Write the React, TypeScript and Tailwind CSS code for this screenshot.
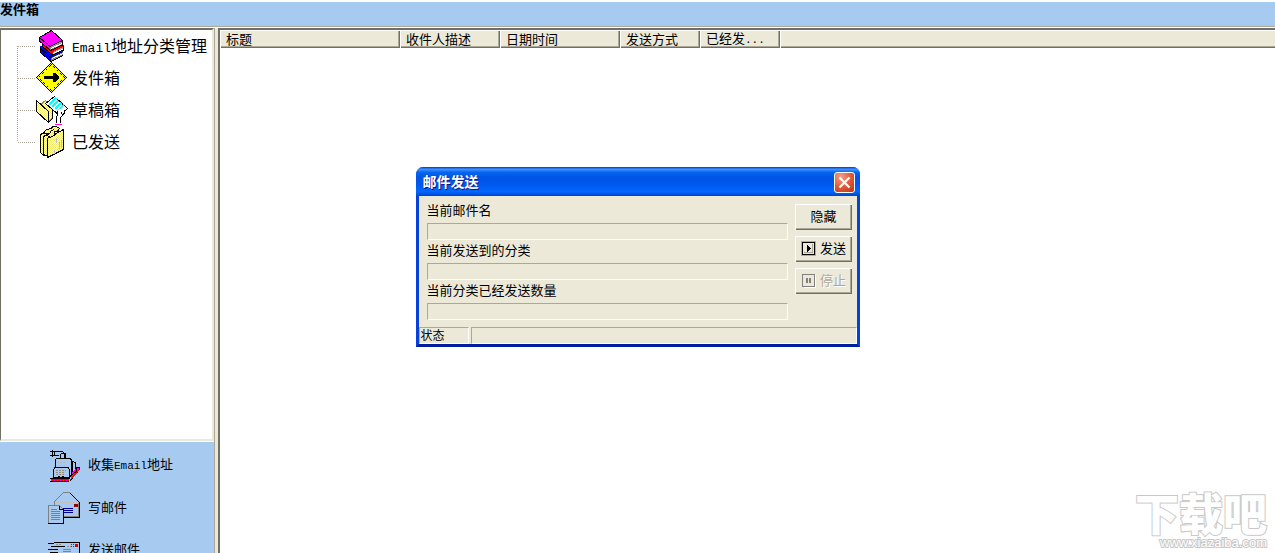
import React from 'react';

const BooksIcon = () => (
  <svg width="32" height="32" viewBox="0 0 32 32" shapeRendering="crispEdges" fill="none">
    {/* Blue book */}
    <path d="M5 17L15 26L27 20V26L15 32L5 23Z" fill="#808080" />
    <path d="M16 28.5L27 23.5" stroke="#fff" />
    <path d="M4.5 16.5L7 15L15.5 25L27 20V22L15 28V31.5L4.5 22.5Z" fill="#0000ff" />
    <path d="M4.5 16.5V22.5L15 31.5L27 25.5M5 19L15 27.5" stroke="#000" />
    {/* Red book */}
    <path d="M7 14L16 21L28 16V20L17 25L7 17Z" fill="#a0a0a0" />
    <path d="M17 23.5L27 19" stroke="#fff" />
    <path d="M6.5 12.5L16 20L28 14.5V16.5L16.5 22V24.5L6.5 16.5Z" fill="#ff0000" />
    <path d="M6.5 13V16.5L16.5 25L27.5 20V15.5" stroke="#000" />
    {/* Magenta book */}
    <path d="M14 16.5L26.5 10.5V15L14.5 20.5Z" fill="#909090" />
    <path d="M15 18.5L26 13.5" stroke="#fff" />
    <path d="M3.5 7.5L14 16.5V20L3.5 11Z" fill="#ff00ff" />
    <path d="M3.5 7.5V11L14.5 20.5L26.5 15V10.5" stroke="#000" />
    <path d="M15.5 .5L26.5 10.5L14 16.5L3.5 7.5Z" fill="#ff00ff" stroke="#000" />
  </svg>
);

const SignIcon = () => (
  <svg width="32" height="32" viewBox="0 0 32 32" shapeRendering="crispEdges">
    <path d="M15.5 .5L30.5 15.5L15.5 30.5L.5 15.5Z" fill="#ffff00" stroke="#000" />
    <path d="M15.5 2.5L28.5 15.5L15.5 28.5L2.5 15.5Z" fill="none" stroke="#000" strokeDasharray="1 1" />
    <path d="M8 14H17V11H19L23 15V16L19 20H17V17H8Z" fill="#000" />
  </svg>
);

const DraftIcon = () => (
  <svg width="32" height="32" viewBox="0 0 32 32" shapeRendering="crispEdges">
    <defs>
      <pattern id="manila" width="2" height="2" patternUnits="userSpaceOnUse">
        <rect width="2" height="2" fill="#fff" />
        <rect width="1" height="1" fill="#f5ea70" />
        <rect x="1" y="1" width="1" height="1" fill="#f5ea70" />
      </pattern>
    </defs>
    <path d="M.5 6.5L4.5 10.5L9.5 6.5L16.5 13.5V23.5L12.5 27.5L.5 17.5Z" fill="url(#manila)" stroke="#8a8a60" />
    <path d="M.5 6.5L12.5 17.5V28.5L.5 17.5Z" fill="url(#manila)" stroke="#000" />
    <path d="M12.5 28.5L16.5 24.5V15.5" fill="none" stroke="#000" />
    <path d="M18.5 2.5L31.5 14.5L23.5 21.5L9.5 9.5Z" fill="#fff" stroke="#000" />
    <path d="M13 11L20 4M16 13L22 7M19 15L25 9M21 17L28 11" stroke="#00ffff" strokeWidth="1.5" />
    <path d="M20.5 29V23.5L21.5 20V16.5L24.5 14.5L25.5 19.5L27.5 16.5L28.5 18.5L24.5 23.5V29" fill="#fff" />
    <path d="M20.5 29V23.5L21.5 20V16.5M25.5 18V20M28.5 16V19L24.5 23.5V29" fill="none" stroke="#000" />
    <path d="M19 30.5H26" stroke="#ff00ff" />
  </svg>
);

const SentIcon = () => (
  <svg width="32" height="32" viewBox="0 0 32 32" shapeRendering="crispEdges" stroke="#000">
    <path d="M4.5 8.5L19.5 .5L22.5 2.5V23.5L7.5 29.5L4.5 26.5Z" fill="url(#manila)" />
    <path d="M7.5 10.5L22.5 2.5V23.5L10.5 29.5L7.5 28.5Z" fill="url(#manila)" />
    <path d="M11.5 12.5L27.5 3.5V23.5L11.5 31.5Z" fill="url(#manila)" />
    <path d="M7 7.5L10.5 3.5L15 2.5L17 .5H20L23.5 2.5L21 5.5L18.5 6L19 9L14.5 11.5L11 9.5L14 7Z" fill="url(#manila)" />
    <path d="M14 5.5L18 3.5" />
    <path d="M18.5 24V28M20.5 12V17M23.5 16V23M25.5 14V22" stroke="#c0c0c0" />
  </svg>
);

const TypewriterIcon = () => (
  <svg width="32" height="32" viewBox="0 0 32 32" shapeRendering="crispEdges" fill="none" stroke="#000">
    <path d="M2 1.5H6V5.5H2M4.5 0V7M6 1.5H14L17.5 4V9M6 5.5H11" />
    <path d="M23 11.5H25.5L27.5 13V23M24.5 12V24.5" />
    <path d="M22 27L31 18" stroke="#ff00ff" strokeWidth="3" />
    <path d="M28 17.5H31.5V19.5L21.5 31.5M28.5 17V21L21 27.5" />
    <path d="M22 30L31 20" stroke="#ff0000" />
    <path d="M7.5 9.5L9 8.5H22L23.5 10V25H7.5Z" fill="#a6caf0" />
    <circle cx="14.5" cy="6" r="2.5" fill="#a6caf0" />
    <path d="M9 12.5H17M9 15.5H18" stroke="#b8b8b8" strokeDasharray="2 1" />
    <path d="M5.5 19.5L7 17.5H20L21.5 19.5V27.5H5.5Z" fill="#a6caf0" />
    <path d="M8 20.5H18M8 22.5H16M8 24.5H16" stroke="#9a8c7c" strokeDasharray="2 1" />
    <path d="M10 26.5H17" strokeDasharray="2 2" />
    <path d="M2 28.5H22M2 31.5H21" />
    <path d="M3 30H21" stroke="#ff0000" strokeWidth="2" />
    <path d="M3 30.5H21" stroke="#ff00ff" strokeDasharray="1 2" />
  </svg>
);

const WriteIcon = () => (
  <svg width="32" height="32" viewBox="0 0 32 32" shapeRendering="crispEdges" fill="none">
    <path d="M6.5 13V9.5L15.5 .5H22" stroke="#808080" />
    <path d="M22 1L31 10" stroke="#000" />
    <path d="M7 10.5H31" stroke="#c0c0c0" />
    <path d="M31.5 10V25.5H15" stroke="#000" />
    <path d="M30.5 11V24.5H16" stroke="#808080" />
    <path d="M26 12H30V15H26Z" fill="#990000" />
    <path d="M15 16.5H25M15 18.5H25M15 20.5H25" stroke="#000099" />
    <path d="M.5 31V13.5H11.5L15 17V31Z" fill="#a6caf0" stroke="#808080" />
    <path d="M11.5 14V17.5H15.5V31.5H0" stroke="#000" />
    <path d="M3 17.5H9M3 19.5H12M3 21.5H12M3 23.5H12M3 25.5H12M3 27.5H12" stroke="#808080" />
  </svg>
);

const SendIcon = () => (
  <svg width="32" height="32" viewBox="0 0 32 32" shapeRendering="crispEdges" fill="none" stroke="#000">
    <path d="M6 8.5H31.5V26.5H6.5" />
    <path d="M0 9.5H6M3 12.5H17M0 15.5H10M2 18.5H10" />
    <path d="M8 10.5H14M19 12.5H23" stroke="#9a8c7c" strokeDasharray="2 1" />
    <path d="M15 15.5H23M15 17.5H23" stroke="#808080" />
    <path d="M23 10.5H27M23 12.5H27" stroke="#dd0000" strokeDasharray="1 1" />
    <path d="M27 10H30V13H27Z" stroke="none" fill="#dd0000" />
  </svg>
);

const treeItems = [
  { label: <><span className="font-['Liberation_Mono'] text-[13px]">Email</span>地址分类管理</>, icon: <BooksIcon />, line: 'M17.5 16V32M18 16.5H36' },
  { label: '发件箱', icon: <SignIcon />, line: 'M17.5 0V32M18 16.5H36' },
  { label: '草稿箱', icon: <DraftIcon />, line: 'M17.5 0V32M18 16.5H36' },
  { label: '已发送', icon: <SentIcon />, line: 'M17.5 0V16M18 16.5H36' },
];

const tools = [
  { label: <>收集<span className="font-['Liberation_Mono'] text-[11px]">Email</span>地址</>, icon: <TypewriterIcon /> },
  { label: '写邮件', icon: <WriteIcon /> },
  { label: '发送邮件', icon: <SendIcon /> },
];

const columns = [
  { label: '标题', width: 'w-[180px]' },
  { label: '收件人描述', width: 'w-[100px]' },
  { label: '日期时间', width: 'w-[120px]' },
  { label: '发送方式', width: 'w-[80px]' },
  { label: <>已经发<span className="font-['Liberation_Mono'] text-[11px] leading-none">...</span></>, width: 'w-[80px]' },
];

const fields = [
  { id: 'mail-name', label: '当前邮件名' },
  { id: 'mail-group', label: '当前发送到的分类' },
  { id: 'mail-count', label: '当前分类已经发送数量' },
];

const buttonClass =
  'flex h-[26px] w-full items-center justify-center gap-1 bg-[#ece9d8] pb-[2px] pl-px leading-4 shadow-[inset_1px_1px_#fff,inset_-1px_-1px_#716f64,inset_-2px_-2px_#aca899]';

function Sidebar() {
  return (
    <aside className="flex w-[215px] shrink-0 flex-col border-r border-[#aca899]">
      <nav className="flex-1 border-t-2 border-r-2 border-b-2 border-l border-t-[#716f64] border-r-[#ece9d8] border-b-[#ece9d8] border-l-[#716f64] bg-white">
        <ul>
          {treeItems.map((item, i) => (
            <li key={i}>
              <a href="#" className="-ml-px flex h-8 items-center whitespace-nowrap text-base leading-[30px]">
                <svg width="36" height="32" className="shrink-0" shapeRendering="crispEdges">
                  <path d={item.line} stroke="#aca899" strokeDasharray="1 1" fill="none" />
                </svg>
                <span className="mr-1 shrink-0">{item.icon}</span>
                <span className="h-8">{item.label}</span>
              </a>
            </li>
          ))}
        </ul>
      </nav>
      <div className="flex h-[112px] shrink-0 flex-col gap-[10px] overflow-hidden border-t border-white bg-[#a6caf0] pt-2 pl-12">
        {tools.map((tool, i) => (
          <button key={i} type="button" className="flex h-8 shrink-0 items-center gap-2 text-left leading-4">
            {tool.icon}
            <span className="pb-[2px]">{tool.label}</span>
          </button>
        ))}
      </div>
    </aside>
  );
}

function MailList() {
  return (
    <main className="min-w-0 flex-1 border-t-2 border-l-2 border-[#716f64] bg-white">
      <table className="w-full table-fixed border-collapse">
        <thead>
          <tr className="h-[17px] bg-[#ece9d8]">
            {columns.map((col, i) => (
              <th
                key={i}
                className={`${col.width} h-[17px] p-0 pb-[2px] pl-[6px] text-left font-normal leading-[15px] whitespace-nowrap shadow-[inset_1px_1px_#fff,inset_-1px_-1px_#716f64,inset_-2px_-2px_#aca899]`}
              >
                {col.label}
              </th>
            ))}
            <th className="p-0 shadow-[inset_1px_1px_#fff,inset_0_-1px_#716f64,inset_0_-2px_#aca899]"></th>
          </tr>
        </thead>
      </table>
    </main>
  );
}

function SendDialog() {
  return (
    <div role="dialog" aria-label="邮件发送" className="w-[444px] rounded-t-lg border-x-[3px] border-b-[3px] border-[#0841d8] border-b-[#001ea0] bg-[#ece9d8]">
      {/* Title bar */}
      <div className="-mx-[3px] flex h-[29px] items-center justify-between rounded-t-[7px] bg-[linear-gradient(#0831d9_0,#3d95ff_8%,#0566f0_18%,#0054e3_35%,#0058ee_60%,#0068ff_85%,#0050e0_95%,#003dd7_100%)] pt-px pr-[5px] pl-[7px]">
        <h2 className="pb-[2px] text-[14px] leading-4 font-bold text-white [text-shadow:1px_1px_#0a1883]">邮件发送</h2>
        <button type="button" aria-label="关闭" className="flex size-[21px] items-center justify-center rounded-[3px] border border-white bg-[radial-gradient(circle_at_30%_20%,#f0a088,#e25b3a_50%,#c03010)]">
          <svg width="13" height="13" viewBox="0 0 13 13" stroke="#fff" strokeWidth="2.2">
            <path d="M1.5 1.5L11.5 11.5M11.5 1.5L1.5 11.5" />
          </svg>
        </button>
      </div>

      <div className="flex h-[131px] gap-[7px] pt-[6px] pr-[5px] pl-2">
        <div className="min-w-0 flex-1">
          {fields.map((field) => (
            <div key={field.id} className="h-10">
              <label htmlFor={field.id} className="block h-[21px] leading-4">{field.label}</label>
              <progress
                id={field.id}
                value={0}
                max={100}
                className="block h-[17px] w-full appearance-none border border-[#aca899] border-r-white border-b-white bg-transparent [&::-webkit-progress-bar]:bg-transparent"
              />
            </div>
          ))}
        </div>
        <div className="flex w-[57px] shrink-0 flex-col gap-[6px] pt-[2px]">
          <button type="button" className={buttonClass}>隐藏</button>
          <button type="button" className={buttonClass}>
            <svg width="15" height="15" viewBox="0 0 15 15" shapeRendering="crispEdges">
              <path d="M.5 .5H14.5V14.5H.5Z" fill="none" stroke="#40e0e0" />
              <path d="M1.5 1.5H13.5V13.5H1.5Z" fill="#ece9d8" stroke="#000" />
              <path d="M11.5 3V11.5H3" fill="none" stroke="#aca899" />
              <path d="M6 4L10 7.5L6 11Z" />
            </svg>
            发送
          </button>
          <button type="button" disabled className={`${buttonClass} text-[#aca899] [text-shadow:1px_1px_#fff]`}>
            <svg width="15" height="15" viewBox="0 0 15 15" shapeRendering="crispEdges">
              <path d="M2.5 14.5H14.5V2" fill="none" stroke="#fff" />
              <path d="M1.5 1.5H13.5V13.5H1.5Z" fill="none" stroke="#808080" />
              <path d="M5 5H7V10H5ZM8 5H10V10H8Z" fill="#808080" />
            </svg>
            停止
          </button>
        </div>
      </div>

      {/* Status bar */}
      <div className="flex h-[17px] gap-[2px] text-[12px] leading-[13px]">
        <div className="w-[50px] border border-[#aca899] border-r-white border-b-white pl-px">状态</div>
        <div className="flex-1 border border-[#aca899] border-r-white border-b-white"></div>
      </div>
    </div>
  );
}

export default function App() {
  return (
    <div className="relative flex h-screen flex-col overflow-hidden bg-[#ece9d8] font-['Noto_Sans_CJK_SC',sans-serif] text-[13px] text-black">
      <header className="h-[28px] shrink-0 border-t-2 border-b border-t-white border-b-white bg-[#a6caf0]">
        <h1 className="h-[25px] border-b border-[#aca899] text-[13px] leading-[13px] font-bold">发件箱</h1>
      </header>

      <div className="flex min-h-0 flex-1 gap-[3px]">
        <Sidebar />
        <MailList />
      </div>

      <div className="absolute inset-x-0 top-[167px] flex justify-center">
        <SendDialog />
      </div>

      {/* Site mark */}
      <div className="absolute right-2 bottom-1 text-right text-white [-webkit-text-stroke:2px_#c8c8c8] [paint-order:stroke_fill]">
        <div className="text-[44px] leading-[48px] font-black">下载吧</div>
        <div className="font-['Liberation_Sans'] text-[13px] leading-[13px]">www.xiazaiba.com</div>
      </div>
    </div>
  );
}
